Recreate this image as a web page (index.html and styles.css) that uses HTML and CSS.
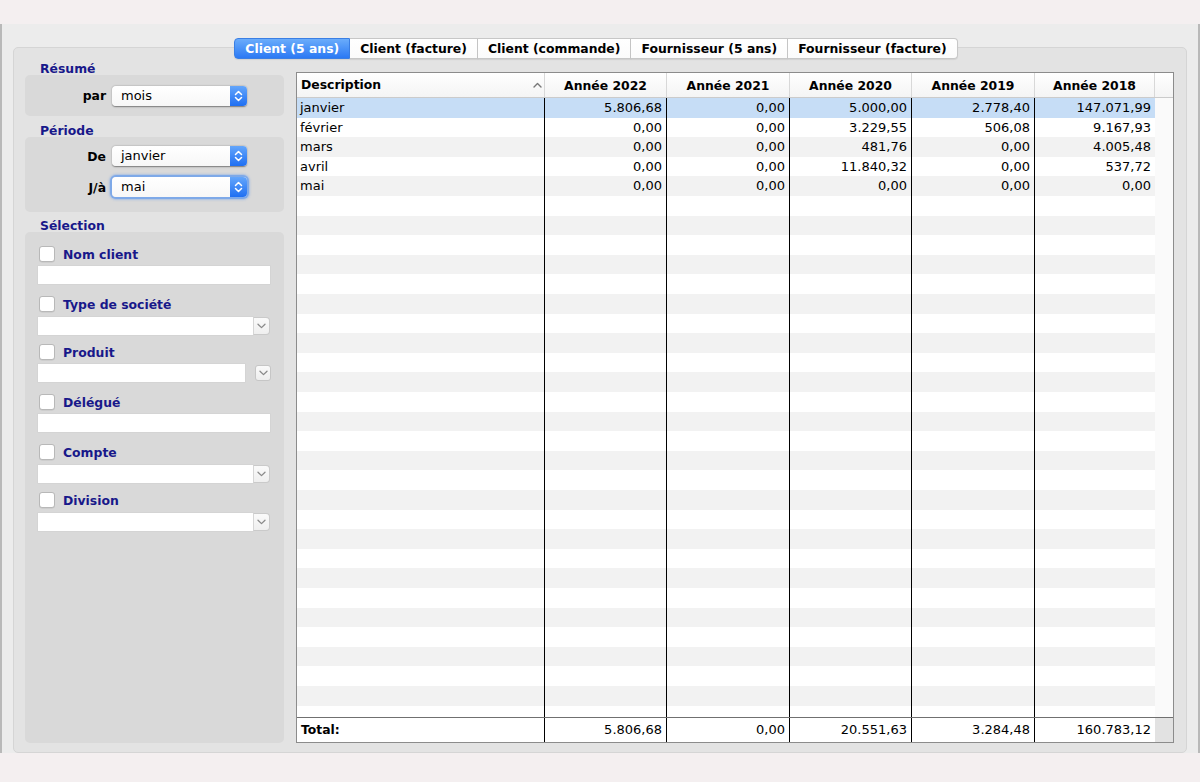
FILE: index.html
```html
<!DOCTYPE html>
<html lang="fr">
<head>
<meta charset="utf-8">
<title>Statistiques</title>
<link rel="stylesheet" href="styles.css">
</head>
<body>
<div class="window">
  <div class="tabs">
    <div class="tab active">Client (5 ans)</div>
    <div class="tab">Client (facture)</div>
    <div class="tab">Client (commande)</div>
    <div class="tab">Fournisseur (5 ans)</div>
    <div class="tab">Fournisseur (facture)</div>
  </div>
  <div class="tabbox">
    <div class="side">
      <div class="grp-label">Résumé</div>
      <div class="grp resume">
        <div class="prow">
          <div class="plabel">par</div>
          <div class="popup"><span class="ptext">mois</span><span class="parrow"><svg width="9" height="14" viewBox="0 0 9 14"><path d="M1.5 5.5 L4.5 2.5 L7.5 5.5 M1.5 8.5 L4.5 11.5 L7.5 8.5" fill="none" stroke="#fff" stroke-width="1.5" stroke-linecap="round" stroke-linejoin="round"/></svg></span></div>
        </div>
      </div>
      <div class="grp-label mt7">Période</div>
      <div class="grp periode">
        <div class="prow">
          <div class="plabel">De</div>
          <div class="popup"><span class="ptext">janvier</span><span class="parrow"><svg width="9" height="14" viewBox="0 0 9 14"><path d="M1.5 5.5 L4.5 2.5 L7.5 5.5 M1.5 8.5 L4.5 11.5 L7.5 8.5" fill="none" stroke="#fff" stroke-width="1.5" stroke-linecap="round" stroke-linejoin="round"/></svg></span></div>
        </div>
        <div class="prow">
          <div class="plabel">J/à</div>
          <div class="popup focus"><span class="ptext">mai</span><span class="parrow"><svg width="9" height="14" viewBox="0 0 9 14"><path d="M1.5 5.5 L4.5 2.5 L7.5 5.5 M1.5 8.5 L4.5 11.5 L7.5 8.5" fill="none" stroke="#fff" stroke-width="1.5" stroke-linecap="round" stroke-linejoin="round"/></svg></span></div>
        </div>
      </div>
      <div class="grp-label mt6">Sélection</div>
      <div class="grp sel">
        <div class="item text">
          <div class="crow"><span class="cb"></span><span class="clabel">Nom client</span></div>
          <div class="field"></div>
        </div>
        <div class="item combo">
          <div class="crow"><span class="cb"></span><span class="clabel">Type de société</span></div>
          <div class="cbox"><span class="cfield"></span><span class="cbtn"><svg width="9" height="6" viewBox="0 0 9 6"><path d="M1 1.2 L4.5 4.6 L8 1.2" fill="none" stroke="#8a8a8a" stroke-width="1.3" stroke-linecap="round" stroke-linejoin="round"/></svg></span></div>
        </div>
        <div class="item text">
          <div class="crow"><span class="cb"></span><span class="clabel">Produit</span></div>
          <div class="split"><span class="sfield"></span><span class="sbtn"><svg width="9" height="6" viewBox="0 0 9 6"><path d="M1 1.2 L4.5 4.6 L8 1.2" fill="none" stroke="#8a8a8a" stroke-width="1.3" stroke-linecap="round" stroke-linejoin="round"/></svg></span></div>
        </div>
        <div class="item text">
          <div class="crow"><span class="cb"></span><span class="clabel">Délégué</span></div>
          <div class="field"></div>
        </div>
        <div class="item combo">
          <div class="crow"><span class="cb"></span><span class="clabel">Compte</span></div>
          <div class="cbox"><span class="cfield"></span><span class="cbtn"><svg width="9" height="6" viewBox="0 0 9 6"><path d="M1 1.2 L4.5 4.6 L8 1.2" fill="none" stroke="#8a8a8a" stroke-width="1.3" stroke-linecap="round" stroke-linejoin="round"/></svg></span></div>
        </div>
        <div class="item combo">
          <div class="crow"><span class="cb"></span><span class="clabel">Division</span></div>
          <div class="cbox"><span class="cfield"></span><span class="cbtn"><svg width="9" height="6" viewBox="0 0 9 6"><path d="M1 1.2 L4.5 4.6 L8 1.2" fill="none" stroke="#8a8a8a" stroke-width="1.3" stroke-linecap="round" stroke-linejoin="round"/></svg></span></div>
        </div>
      </div>
    </div>

    <div class="table">
      <div class="thead">
        <div class="th c0 desc"><span>Description</span><svg width="9" height="6" viewBox="0 0 9 6"><path d="M1 5 L4.5 1.5 L8 5" fill="none" stroke="#777" stroke-width="1.4" stroke-linecap="round" stroke-linejoin="round"/></svg></div>
        <div class="th c1">Année 2022</div>
        <div class="th c2">Année 2021</div>
        <div class="th c3">Année 2020</div>
        <div class="th c4">Année 2019</div>
        <div class="th c5">Année 2018</div>
        <div class="th c6 blank"></div>
      </div>
      <div class="tbody">
        <div class="col c0 line desc">
          <div class="cell selrow">janvier</div>
          <div class="cell">février</div>
          <div class="cell">mars</div>
          <div class="cell">avril</div>
          <div class="cell">mai</div>
        </div>
        <div class="col c1 line">
          <div class="cell selrow">5.806,68</div>
          <div class="cell">0,00</div>
          <div class="cell">0,00</div>
          <div class="cell">0,00</div>
          <div class="cell">0,00</div>
        </div>
        <div class="col c2 line">
          <div class="cell selrow">0,00</div>
          <div class="cell">0,00</div>
          <div class="cell">0,00</div>
          <div class="cell">0,00</div>
          <div class="cell">0,00</div>
        </div>
        <div class="col c3 line">
          <div class="cell selrow">5.000,00</div>
          <div class="cell">3.229,55</div>
          <div class="cell">481,76</div>
          <div class="cell">11.840,32</div>
          <div class="cell">0,00</div>
        </div>
        <div class="col c4 line">
          <div class="cell selrow">2.778,40</div>
          <div class="cell">506,08</div>
          <div class="cell">0,00</div>
          <div class="cell">0,00</div>
          <div class="cell">0,00</div>
        </div>
        <div class="col c5">
          <div class="cell selrow">147.071,99</div>
          <div class="cell">9.167,93</div>
          <div class="cell">4.005,48</div>
          <div class="cell">537,72</div>
          <div class="cell">0,00</div>
        </div>
        <div class="col c6 track"></div>
      </div>
      <div class="tfoot">
        <div class="tf c0 line desc"><b>Total:</b></div>
        <div class="tf c1 line">5.806,68</div>
        <div class="tf c2 line">0,00</div>
        <div class="tf c3 line">20.551,63</div>
        <div class="tf c4 line">3.284,48</div>
        <div class="tf c5">160.783,12</div>
        <div class="tf c6 corner"></div>
      </div>
    </div>
  </div>
</div>
</body>
</html>
```

FILE: styles.css
```css
* { box-sizing: border-box; }

body {
  margin: 0;
  background: #f4eff0;
  font-family: "DejaVu Sans", "Verdana", sans-serif;
  font-size: 13px;
  color: #000;
}

.window {
  margin-top: 24px;
  width: 1200px;
  height: 729px;
  border-left: 2px solid #b9b9b9;
  border-right: 2px solid #b9b9b9;
  background: #ececec;
  padding: 14px 0 0 11px;
}

/* Tabs */
.tabs {
  position: relative;
  z-index: 1;
  width: 1174px;
  height: 21px;
  margin-bottom: -12px;
  padding-right: 8px;
  display: flex;
  justify-content: center;
}

.tab {
  height: 21px;
  line-height: 19px;
  padding: 0 10px;
  background: linear-gradient(#ffffff, #fbfbfb);
  border: 1px solid #c7c7c7;
  border-left: none;
  font-weight: bold;
  font-size: 12.4px;
  white-space: nowrap;
  box-shadow: 0 1px 1px rgba(0,0,0,0.08);
}

.tab:first-child {
  border-left: 1px solid #3d82e6;
  border-radius: 4px 0 0 4px;
}

.tab:last-child {
  border-radius: 0 4px 4px 0;
}

.tab.active {
  background: linear-gradient(#6aacfb, #2b79f4);
  border-color: #3a7fe4;
  color: #fff;
}

/* Tab box */
.tabbox {
  width: 1174px;
  height: 706px;
  background: #e3e3e3;
  border: 1px solid #d5d5d5;
  border-radius: 5px;
  padding: 13px 12px 9px 11px;
  display: flex;
  gap: 12px;
}

/* Sidebar */
.side {
  width: 259px;
  display: flex;
  flex-direction: column;
}

.grp-label {
  height: 14px;
  line-height: 15px;
  padding-left: 15px;
  font-weight: bold;
  font-size: 12.4px;
  color: #18188a;
}

.mt7 { margin-top: 7px; }
.mt6 { margin-top: 6px; }

.grp {
  background: #d9d9d9;
  border-radius: 5px;
}

.grp.resume {
  height: 41px;
  display: flex;
  align-items: center;
}

.grp.periode {
  padding: 9px 0 15px;
  display: flex;
  flex-direction: column;
  gap: 11px;
}

.prow {
  display: flex;
  align-items: center;
  height: 20px;
}

.plabel {
  width: 81px;
  margin-right: 6px;
  text-align: right;
  font-weight: bold;
  font-size: 12.4px;
}

.popup {
  width: 135px;
  height: 20px;
  display: flex;
  background: linear-gradient(#ffffff, #f7f7f7);
  border-radius: 4px;
  box-shadow: 0 0.5px 1.5px rgba(0,0,0,0.45);
}

.popup.focus {
  box-shadow: 0 0 0 2px #7ea9e8, 0 0 2px 3px rgba(110,160,235,0.45);
}

.ptext {
  flex: 1;
  padding-left: 9px;
  line-height: 20px;
}

.parrow {
  width: 17px;
  border-radius: 0 4px 4px 0;
  background: linear-gradient(#64a6fb, #1f6ff2);
  display: flex;
  align-items: center;
  justify-content: center;
}

.grp.sel {
  flex: 1;
  padding: 14px 14px 0 13px;
}

.item {
  display: flex;
  flex-direction: column;
}

.item.text { margin-bottom: 12px; }
.item.combo { margin-bottom: 9px; }

.crow {
  height: 16px;
  display: flex;
  align-items: center;
  gap: 8px;
  padding-left: 1px;
}

.cb {
  width: 16px;
  height: 16px;
  background: #fff;
  border: 1px solid #b8b8b8;
  border-radius: 3px;
  box-shadow: 0 0.5px 0.5px rgba(0,0,0,0.1);
}

.clabel {
  font-weight: bold;
  font-size: 12.4px;
  color: #18188a;
  line-height: 17px;
}

.field {
  margin-top: 4px;
  width: 232px;
  height: 18px;
  background: #fff;
  box-shadow: 0 0 0 0.5px #cfcfcf;
}

.cbox {
  margin-top: 5px;
  width: 232px;
  height: 18px;
  display: flex;
}

.cfield {
  width: 215px;
  background: #fff;
  box-shadow: 0 0 0 0.5px #cfcfcf;
}

.cbtn {
  width: 17px;
  background: linear-gradient(#fafafa, #efefef);
  border: 1px solid #cacaca;
  border-left: 1px solid #d6d6d6;
  border-radius: 0 4px 4px 0;
  display: flex;
  align-items: center;
  justify-content: center;
}

.split {
  margin-top: 4px;
  width: 233px;
  height: 18px;
  display: flex;
  align-items: center;
  gap: 10px;
}

.sfield {
  width: 207px;
  height: 18px;
  background: #fff;
  box-shadow: 0 0 0 0.5px #cfcfcf;
}

.sbtn {
  width: 16px;
  height: 16px;
  background: linear-gradient(#fafafa, #eeeeee);
  border: 1px solid #c6c6c6;
  border-radius: 3px;
  display: flex;
  align-items: center;
  justify-content: center;
}

/* Table */
.table {
  margin-top: 11px;
  width: 878px;
  height: 671px;
  border: 1px solid #8c8c8c;
  background: #fff;
  display: flex;
  flex-direction: column;
}

.c0 { width: 248px; }
.c1 { width: 122px; }
.c2 { width: 123px; }
.c3 { width: 122px; }
.c4 { width: 123px; }
.c5 { width: 120px; }
.c6 { width: 18px; }

.thead {
  height: 25px;
  display: flex;
  border-bottom: 1px solid #cbcbcb;
  background: linear-gradient(#ffffff, #f4f4f4);
}

.th {
  height: 24px;
  line-height: 26px;
  text-align: center;
  font-weight: bold;
  font-size: 12.4px;
  border-right: 1px solid #d8d8d8;
  white-space: nowrap;
}

.th.desc {
  display: flex;
  justify-content: space-between;
  align-items: center;
  text-align: left;
  padding: 0 2px 0 4px;
}

.th.blank { border-right: none; }

.tbody {
  flex: 1;
  display: flex;
  overflow: hidden;
}

.col {
  height: 100%;
  background: repeating-linear-gradient(#f2f2f2 0, #f2f2f2 19.6px, #ffffff 19.6px, #ffffff 39.2px);
}

.col.line, .tf.line { border-right: 1px solid #000; }

.col.track {
  background: #fafafa;
}

.cell {
  height: 19.6px;
  line-height: 20.6px;
  padding: 0 4px;
  text-align: right;
  white-space: nowrap;
}

.desc .cell { text-align: left; padding-left: 3px; }

.cell.selrow { background: #c6ddf6; }

.tfoot {
  height: 25px;
  display: flex;
  border-top: 1px solid #707070;
}

.tf {
  height: 24px;
  line-height: 24px;
  padding: 0 4px;
  text-align: right;
  white-space: nowrap;
}

.tf.desc { text-align: left; padding-left: 4px; font-size: 12.4px; }

.tf.corner { background: #e2e2e2; padding: 0; }
```
